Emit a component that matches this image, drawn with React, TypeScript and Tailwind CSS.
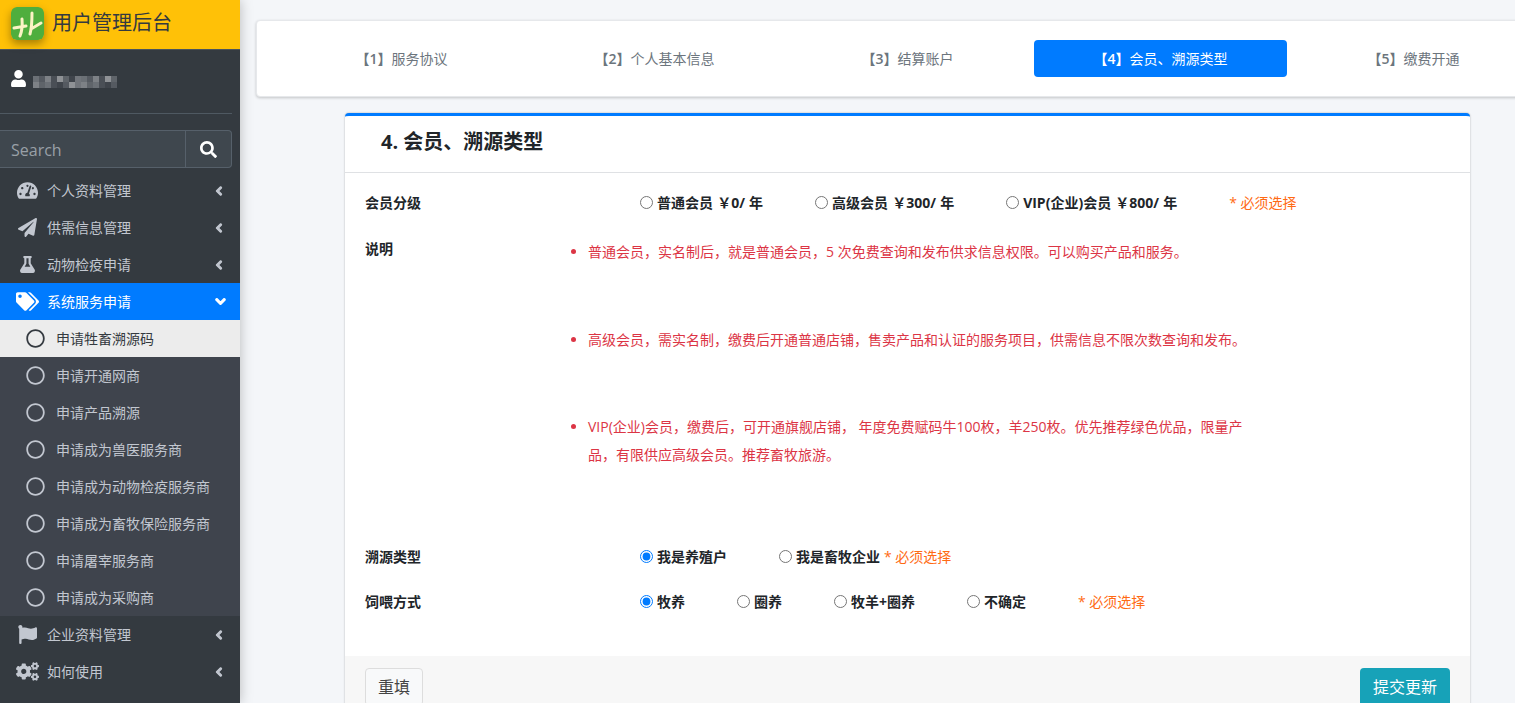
import type { ReactNode } from 'react';
import {
  FaChevronDown,
  FaChevronLeft,
  FaCogs,
  FaFlag,
  FaFlask,
  FaPaperPlane,
  FaRegCircle,
  FaSearch,
  FaTachometerAlt,
  FaTags,
  FaUser,
} from 'react-icons/fa';

const font = '[font-family:"Open_Sans","Noto_Sans_CJK_SC",sans-serif]';

const subItems = [
  '申请牲畜溯源码',
  '申请开通网商',
  '申请产品溯源',
  '申请成为兽医服务商',
  '申请成为动物检疫服务商',
  '申请成为畜牧保险服务商',
  '申请屠宰服务商',
  '申请成为采购商',
];

const tabs = ['服务协议', '个人基本信息', '结算账户', '会员、溯源类型', '缴费开通'];

const mosaic = ['#6b7076', '#555a61', '#7d8186', '#4a4f56', '#8f9296', '#5f646a', '#3f444b', '#71757b'];

function NavItem({ icon, label, open }: { icon: ReactNode; label: string; open?: boolean }) {
  return (
    <div className={`flex h-[37px] items-center text-sm ${open ? 'bg-[#007bff] pr-[14px] text-white' : 'pr-[16px] text-[#c2c7d0]'}`}>
      <span className="flex w-[47px] shrink-0 justify-center pl-[9px] pr-[1px] text-[21px]">{icon}</span>
      <span className="flex-1">{label}</span>
      {open ? (
        <FaChevronDown className="text-[11px] [stroke-width:60px]" />
      ) : (
        <FaChevronLeft className="text-[10px] [stroke-width:60px]" />
      )}
    </div>
  );
}

function Sidebar() {
  return (
    <aside className="relative z-10 flex h-full w-[240px] shrink-0 flex-col bg-[#343a40] shadow-[0_0_12px_rgba(0,0,0,0.25)]">
      <div className="flex h-[50px] shrink-0 items-center gap-2 border-b border-[#4b545c] bg-[#ffc107] pb-[3px] pl-[11px]">
        <svg width="33" height="33" viewBox="0 0 33 33" className="shrink-0 rounded-md shadow-[0_4px_8px_rgba(0,0,0,0.35)]">
          <rect width="33" height="33" rx="5" fill="#4fae3d" />
          <path d="M3 21L15 19M11 12C11.500 18 11 24 9 29" stroke="#fbf3c4" strokeWidth="3" fill="none" strokeLinecap="round" />
          <path d="M21 6C21 13 21 20 19 27M20 22L30 16" stroke="#fbf3c4" strokeWidth="3" fill="none" strokeLinecap="round" />
        </svg>
        <span className="text-xl text-[#343a40]">用户管理后台</span>
      </div>
      <div className="mr-2 flex h-[64px] shrink-0 items-center border-b border-[#4f5962] pb-[3px] pl-[10px]">
        <FaUser className="mb-[4px] text-[17px] text-white" />
        <svg width="84" height="12" viewBox="0 0 84 12" className="ml-[6px] mt-[4px]">
          {Array.from({ length: 14 }).map((_, i) => (
            <g key={i}>
              <rect x={i * 6} y="0" width="6" height="6" fill={mosaic[i % 8]} />
              <rect x={i * 6} y="6" width="6" height="6" fill={mosaic[(i * 3 + 2) % 8]} />
            </g>
          ))}
        </svg>
      </div>
      <div className="mr-2 mt-4 flex h-[38px] shrink-0 overflow-hidden rounded-r border-y border-r border-[#56606a] bg-[#3f474e]">
        <span className="flex-1 pl-[11px] text-base leading-[38px] text-[#99a0a7]">Search</span>
        <span className="flex w-[46px] items-center justify-center border-l border-[#56606a] text-[17px] text-white">
          <FaSearch />
        </span>
      </div>
      <nav className="mt-[4px]">
        <NavItem icon={<FaTachometerAlt />} label="个人资料管理" />
        <NavItem icon={<FaPaperPlane className="text-[19px]" />} label="供需信息管理" />
        <NavItem icon={<FaFlask className="text-[17px]" />} label="动物检疫申请" />
        <NavItem icon={<FaTags className="text-[23px]" />} label="系统服务申请" open />
        <div className="bg-[#3f444d]">
          {subItems.map((item, i) => (
            <div
              key={item}
              className={`flex h-[37px] items-center pl-[26px] text-sm ${i === 0 ? 'bg-[#ececec] text-[#343a40]' : 'text-[#c2c7d0]'}`}
            >
              <FaRegCircle className="mr-[11px] text-[19px]" />
              {item}
            </div>
          ))}
        </div>
        <NavItem icon={<FaFlag className="text-[19px]" />} label="企业资料管理" />
        <NavItem icon={<FaCogs className="text-[23px]" />} label="如何使用" />
      </nav>
    </aside>
  );
}

function Radio({ label, checked }: { label: string; checked?: boolean }) {
  return (
    <label className="flex items-center font-bold text-[#212529] [word-spacing:0.5px]">
      <input type="radio" name={label} defaultChecked={checked} className="mb-[2px] mr-[4px] accent-[#007bff]" />
      {label}
    </label>
  );
}

function Required() {
  return <span className="text-[#ff6a13]">* 必须选择</span>;
}

function FormRow({ label, children, className }: { label: string; children: ReactNode; className?: string }) {
  return (
    <div className={`flex h-[24px] items-center px-5 text-sm ${className ?? ''}`}>
      <span className="w-[275px] shrink-0 font-semibold text-[#212529]">{label}</span>
      <div className="flex items-center gap-[52px]">{children}</div>
    </div>
  );
}

export default function App() {
  return (
    <div className={`flex h-[703px] overflow-hidden bg-[#f4f6f9] ${font}`}>
      <Sidebar />
      <main className="min-w-0 flex-1 pt-5">
        <div className="ml-4 flex h-[77px] w-[1304px] items-center rounded-l border border-[#e6e8eb] bg-white pl-[18px] shadow-[0_1px_3px_rgba(0,0,0,0.2)]">
          {tabs.map((tab, i) => (
            <div
              key={tab}
              className={`flex h-[37px] w-[253px] shrink-0 items-center justify-center rounded text-sm ${i === 3 ? 'bg-[#007bff] text-white' : 'text-[#6c757d]'}`}
            >
              <span className="font-semibold">【{i + 1}】</span>
              {tab}
            </div>
          ))}
        </div>
        <section className="ml-[105px] mt-4 w-[1125px] rounded border-t-[3px] border-[#007bff] bg-white shadow-[0_0_2px_rgba(0,0,0,0.3)]">
          <h3 className="flex h-[57px] items-center border-b border-[#dfe1e4] pb-[4px] pl-9 text-xl font-bold text-[#212529]">
            4. 会员、溯源类型
          </h3>
          <FormRow label="会员分级" className="mt-[18px]">
            <Radio label="普通会员 ￥0/ 年" />
            <Radio label="高级会员 ￥300/ 年" />
            <Radio label="VIP(企业)会员 ￥800/ 年" />
            <Required />
          </FormRow>
          <div className="mt-[22px] flex px-5 text-sm">
            <span className="w-[183px] shrink-0 font-semibold leading-[24px] text-[#212529]">说明</span>
            <ul className="w-[700px] list-disc pl-10 pt-[1px] leading-[28px] text-[#dc3545]">
              <li className="mb-[60px]">普通会员，实名制后，就是普通会员，5 次免费查询和发布供求信息权限。可以购买产品和服务。</li>
              <li className="mb-[59px]">高级会员，需实名制，缴费后开通普通店铺，售卖产品和认证的服务项目，供需信息不限次数查询和发布。</li>
              <li>VIP(企业)会员，缴费后，可开通旗舰店铺， 年度免费赋码牛100枚，羊250枚。优先推荐绿色优品，限量产品，有限供应高级会员。推荐畜牧旅游。</li>
            </ul>
          </div>
          <FormRow label="溯源类型" className="mt-[76px]">
            <Radio label="我是养殖户" checked />
            <div className="flex items-center gap-1">
              <Radio label="我是畜牧企业" />
              <Required />
            </div>
          </FormRow>
          <FormRow label="饲喂方式" className="mt-[21px]">
            <Radio label="牧养" checked />
            <Radio label="圈养" />
            <Radio label="牧羊+圈养" />
            <Radio label="不确定" />
            <Required />
          </FormRow>
          <div className="mt-[42px] flex items-start justify-between bg-[#f7f7f7] px-5 py-3">
            <button className="h-[38px] rounded border border-[#ddd] bg-[#f8f9fa] px-3 text-base text-[#444]">重填</button>
            <button className="h-[38px] w-[90px] rounded bg-[#17a2b8] text-base text-white">提交更新</button>
          </div>
        </section>
      </main>
    </div>
  );
}
